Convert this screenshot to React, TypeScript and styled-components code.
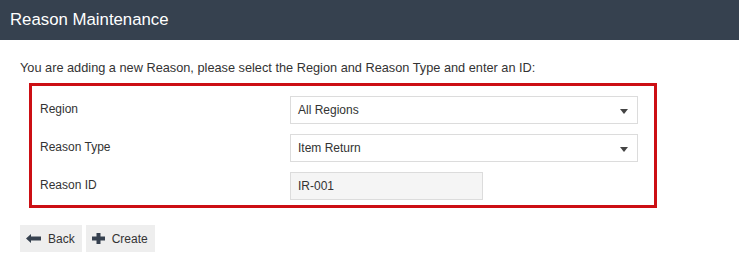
import React from "react";
import styled, { createGlobalStyle } from "styled-components";

const FONT = `"Liberation Sans", Arial, Helvetica, sans-serif`;

const Global = createGlobalStyle`
  html, body { margin: 0; padding: 0; background: #fff; }
  body { font-family: ${FONT}; color: #333; }
  * { box-sizing: border-box; }
`;

const Header = styled.header`
  height: 40px;
  background: #36414f;
  display: flex;
  align-items: center;
  padding: 0 10px;
  padding-bottom: 1px;
`;

const Title = styled.h1`
  margin: 0;
  font-size: 16.8px;
  font-weight: normal;
  color: #fff;
`;

const Body = styled.main`
  padding: 21px 20px 0 20px;
`;

const Intro = styled.p`
  margin: 0;
  font-size: 12.75px;
  line-height: 14px;
  color: #333;
`;

const Panel = styled.section`
  margin: 8px 0 0 9px;
  width: 628px;
  border: 3px solid #cc0f14;
  padding: 10px 16px 5px 8px;
  display: flex;
  flex-direction: column;
  gap: 10px;
`;

const Row = styled.div`
  display: grid;
  grid-template-columns: 250px 1fr;
  align-items: center;
  height: 28px;
`;

const Label = styled.label`
  font-size: 12px;
  color: #333;
  padding-bottom: 3px;
`;

const SelectBox = styled.div`
  position: relative;
  height: 28px;
  border: 1px solid #dcdcdc;
  background: #fff;
  display: flex;
  align-items: center;
  padding: 0 0 0 7px;
  font-size: 12px;
  color: #333;
`;

const Arrow = styled.span`
  position: absolute;
  right: 9px;
  top: 12px;
  width: 0;
  height: 0;
  border-left: 4px solid transparent;
  border-right: 4px solid transparent;
  border-top: 5px solid #444;
`;

const TextInput = styled.div`
  width: 193px;
  height: 28px;
  border: 1px solid #dcdcdc;
  background: #f5f5f5;
  display: flex;
  align-items: center;
  padding-left: 7px;
  font-size: 12px;
  color: #333;
`;

const Actions = styled.div`
  display: flex;
  gap: 4px;
  margin-top: 17px;
`;

const Button = styled.button`
  height: 27px;
  border: none;
  background: #eeeeee;
  display: flex;
  align-items: center;
  gap: 7px;
  padding: 0 7px 0 6px;
  font-family: ${FONT};
  font-size: 12px;
  color: #333;
  cursor: pointer;
`;

const BackIcon = () => (
  <svg width="15" height="9" viewBox="0 0 15 9">
    <path d="M0 4.5 L5 0 L5 2.5 L15 2.5 L15 6.5 L5 6.5 L5 9 Z" fill="#36414f" />
  </svg>
);

const PlusIcon = () => (
  <svg width="13" height="11" viewBox="0 0 13 11">
    <path d="M4.5 0 H8.5 V3.5 H13 V7.5 H8.5 V11 H4.5 V7.5 H0 V3.5 H4.5 Z" fill="#36414f" />
  </svg>
);

export default function App() {
  return (
    <>
      <Global />
      <Header>
        <Title>Reason Maintenance</Title>
      </Header>
      <Body>
        <Intro>
          You are adding a new Reason, please select the Region and Reason Type and enter an ID:
        </Intro>
        <Panel>
          <Row>
            <Label>Region</Label>
            <SelectBox>
              All Regions
              <Arrow />
            </SelectBox>
          </Row>
          <Row>
            <Label>Reason Type</Label>
            <SelectBox>
              Item Return
              <Arrow />
            </SelectBox>
          </Row>
          <Row>
            <Label>Reason ID</Label>
            <TextInput>IR-001</TextInput>
          </Row>
        </Panel>
        <Actions>
          <Button>
            <BackIcon />
            Back
          </Button>
          <Button>
            <PlusIcon />
            Create
          </Button>
        </Actions>
      </Body>
    </>
  );
}
